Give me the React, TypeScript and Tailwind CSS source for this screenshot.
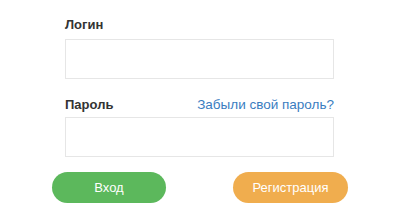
import React, { useState } from 'react';

export default function App() {
  const [login, setLogin] = useState('');
  const [pass, setPass] = useState('');

  return (
    <div className="w-[400px] h-[215px] bg-white overflow-hidden" style={{ fontFamily: '"Liberation Sans", Arial, sans-serif' }}>
      <form className="pt-4" onSubmit={e => e.preventDefault()}>
        <div className="ml-[65px] w-[269px]">
          <label className="block text-[13px] leading-[18px] font-bold text-[#333]">Логин</label>
          <input
            type="text"
            value={login}
            onChange={e => setLogin(e.target.value)}
            className="mt-[5px] block w-full h-[40px] border border-[#e6e6e6] bg-white outline-none px-3 text-[13px]"
          />
          <div className="mt-[17px] flex items-center justify-between">
            <label className="text-[13px] leading-[18px] font-bold text-[#333]">Пароль</label>
            <a href="#" className="text-[13.5px] leading-[18px] text-[#3a7dbf]">Забыли свой пароль?</a>
          </div>
          <input
            type="password"
            value={pass}
            onChange={e => setPass(e.target.value)}
            className="mt-[3px] block w-full h-[40px] border border-[#e6e6e6] bg-white outline-none px-3 text-[13px]"
          />
        </div>
        <div className="ml-[52px] w-[296px] mt-[15px] flex justify-between">
          <button className="w-[114px] h-[31px] rounded-full bg-[#5cb85c] text-white text-[13px]">Вход</button>
          <button type="button" className="w-[115px] h-[31px] rounded-full bg-[#f0ad4e] text-white text-[13px]">Регистрация</button>
        </div>
      </form>
    </div>
  );
}
